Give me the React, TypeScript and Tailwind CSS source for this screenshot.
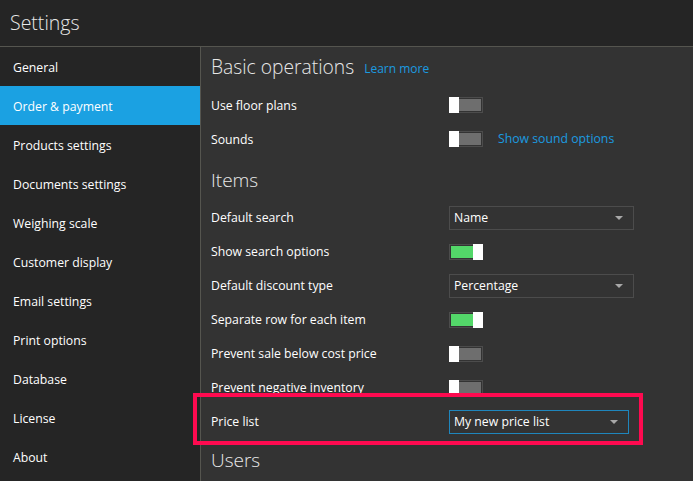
const navItems = [
  "General",
  "Order & payment",
  "Products settings",
  "Documents settings",
  "Weighing scale",
  "Customer display",
  "Email settings",
  "Print options",
  "Database",
  "License",
  "About",
];

function Toggle({ on = false }: { on?: boolean }) {
  return (
    <div className="relative h-4 w-[34px] border border-[#4c4c4c] p-px">
      <div className={on ? "h-full w-full bg-[#53d769]" : "h-full w-full bg-[#6e6e6e]"} />
      <div className={on ? "absolute -top-px -right-px h-4 w-2.5 bg-white" : "absolute -top-px -left-px h-4 w-2.5 bg-white"} />
    </div>
  );
}

function Select({ value, focused = false }: { value: string; focused?: boolean }) {
  return (
    <div
      className={
        focused
          ? "flex h-6 w-[180px] items-center justify-between border border-[#1f86bd] pl-1 pr-2.5"
          : "flex h-6 w-[185px] items-center justify-between border border-[#4c4c4c] pl-1 pr-2.5"
      }
    >
      <span>{value}</span>
      <div className="h-0 w-0 border-x-4 border-t-4 border-x-transparent border-t-[#a8a8a8]" />
    </div>
  );
}

function Row({ label, low = false, children }: { label: string; low?: boolean; children: React.ReactNode }) {
  return (
    <div className="flex h-[34px] items-center">
      <div className={low ? "w-[238px] shrink-0 pt-0.5" : "w-[238px] shrink-0 pt-px"}>{label}</div>
      {children}
    </div>
  );
}

export default function App() {
  return (
    <div className="relative flex h-[481px] w-[693px] flex-col overflow-hidden bg-[#333333] font-['Open_Sans',sans-serif] text-[12.25px] text-white">
      <header className="flex h-[47px] shrink-0 items-center border-b border-[#55554f] bg-[#252525] pl-2.5 text-[19.5px] font-light text-[#e8e8e8]">
        Settings
      </header>
      <div className="flex min-h-0 flex-1">
        <nav className="w-[201px] shrink-0 border-r border-[#55554f] bg-[#252525]">
          {navItems.map((item) => (
            <div
              key={item}
              className={
                item === "Order & payment"
                  ? "flex h-[39px] items-center bg-[#1ba1e2] pl-[13px] pt-1"
                  : "flex h-[39px] items-center pl-[13px] pt-1"
              }
            >
              {item}
            </div>
          ))}
        </nav>
        <main className="min-w-0 flex-1 pl-2.5">
          <div className="flex h-[41px] items-center gap-[10px]">
            <h2 className="text-[19.25px] font-light text-[#e8e8e8]">Basic operations</h2>
            <a className="pt-0.5 text-[12px] text-[#1b9be0]">Learn more</a>
          </div>
          <Row label="Use floor plans" low>
            <Toggle />
          </Row>
          <Row label="Sounds" low>
            <Toggle />
            <a className="ml-[15px] pt-px text-[#1b9be0]">Show sound options</a>
          </Row>
          <h2 className="flex h-[45px] items-center pt-1 text-[19px] font-light text-[#e8e8e8]">Items</h2>
          <Row label="Default search">
            <Select value="Name" />
          </Row>
          <Row label="Show search options">
            <Toggle on />
          </Row>
          <Row label="Default discount type">
            <Select value="Percentage" />
          </Row>
          <Row label="Separate row for each item">
            <Toggle on />
          </Row>
          <Row label="Prevent sale below cost price">
            <Toggle />
          </Row>
          <Row label="Prevent negative inventory">
            <Toggle />
          </Row>
          <Row label="Price list">
            <Select value="My new price list" focused />
          </Row>
          <h2 className="flex h-[42px] items-center text-[19px] font-light text-[#e8e8e8]">Users</h2>
        </main>
      </div>
      <div className="absolute left-[193px] top-[393px] h-[52px] w-[450px] border-4 border-[#ff0a50]" />
    </div>
  );
}
